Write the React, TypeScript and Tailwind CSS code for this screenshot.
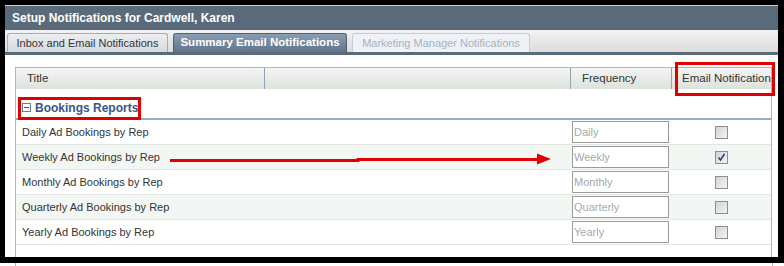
import React from 'react';

const rows = [
  { title: 'Daily Ad Bookings by Rep', freq: 'Daily', checked: false },
  { title: 'Weekly Ad Bookings by Rep', freq: 'Weekly', checked: true },
  { title: 'Monthly Ad Bookings by Rep', freq: 'Monthly', checked: false },
  { title: 'Quarterly Ad Bookings by Rep', freq: 'Quarterly', checked: false },
  { title: 'Yearly Ad Bookings by Rep', freq: 'Yearly', checked: false },
];

const CheckBox = ({ checked }: { checked: boolean }) => (
  <span className="flex h-[13px] w-[13px] items-center justify-center border border-[#8f8f8f] bg-gradient-to-br from-[#d4d4d4] to-[#f4f4f4]">
    {checked && (
      <svg width="9" height="9" viewBox="0 0 9 9">
        <path d="M1.5 4.5 L3.5 7 L7.5 1" fill="none" stroke="#2c3a80" strokeWidth="1.6" />
      </svg>
    )}
  </span>
);

export default function App() {
  return (
    <div className="relative h-[266px] w-[784px] overflow-hidden bg-white font-['Liberation_Sans',Arial,sans-serif] text-[11px] text-[#333]">
      <div className="flex h-[263px] flex-col border-b-[6px] border-l-[5px] border-r-[6px] border-t-[5px] border-black">
        {/* Title bar */}
        <div className="h-[1px] bg-[#c9d1d8]" />
        <div className="flex h-[24px] items-center bg-[#596b7a] pl-[7px] text-[12px] font-bold text-white">
          Setup Notifications for Cardwell, Karen
        </div>

        {/* Tabs */}
        <div className="flex h-[22px] items-end gap-[5px] bg-gradient-to-b from-[#f2f2f2] to-[#dcdcdc] pl-[2px]">
          <div className="flex h-[19px] w-[161px] items-center justify-center rounded-t-[3px] border border-b-0 border-[#a3adb8] bg-gradient-to-b from-[#eceef1] to-[#d5dae0] text-[#333]">
            Inbox and Email Notifications
          </div>
          <div className="flex h-[19px] w-[174px] items-center justify-center rounded-t-[3px] border border-b-0 border-[#4f6176] bg-gradient-to-b from-[#8a9eb3] to-[#5f7489] text-[11.5px] font-bold text-white">
            Summary Email Notifications
          </div>
          <div className="flex h-[19px] w-[178px] items-center justify-center rounded-t-[3px] border border-b-0 border-[#c3ccd7] bg-[#eef2f7] text-[#a9b1bc]">
            Marketing Manager Notifications
          </div>
        </div>
        <div className="h-[3px] bg-[#5a6b7a]" />

        {/* Content */}
        <div className="flex flex-1 flex-col overflow-hidden pl-[10px] pr-[6px] pt-[12px]">
          <div className="flex flex-1 flex-col border-l border-r border-t border-[#a9b7c5]">
            <div className="grid h-[21px] grid-cols-[249px_306px_101px_99px] bg-gradient-to-b from-[#f3f5f3] to-[#dde2dd] text-[11.5px]">
              <div className="flex items-center border-r border-[#8fa2b6] pl-[11px]">Title</div>
              <div className="border-r border-[#8fa2b6]" />
              <div className="flex items-center border-r border-[#8fa2b6] pl-[11px]">Frequency</div>
              <div className="flex items-center pl-[10px]">Email Notification</div>
            </div>

            <div className="flex h-[31px] items-center gap-[4px] border-b-2 border-[#9aabbd] pl-[6px] pt-[8px] text-[#3b5588]">
              <span className="flex h-[9px] w-[9px] items-center justify-center border border-[#6b7f99]">
                <span className="h-[1px] w-[5px] bg-[#3b5588]" />
              </span>
              <span className="text-[12px] font-bold">Bookings Reports</span>
            </div>

            {rows.map((r, i) => (
              <div
                key={r.title}
                className={`grid h-[25px] grid-cols-[555px_101px_99px] border-b border-[#e3e7e3] ${
                  i % 2 === 1 ? 'bg-[#f3f7f3]' : 'bg-white'
                }`}
              >
                <div className="flex items-center pl-[6px]">{r.title}</div>
                <div className="flex items-center pl-[1px]">
                  <div className="flex h-[22px] w-[97px] items-center border border-[#9a9a9a] bg-white pl-[1px] text-[#a8a8a8]">
                    {r.freq}
                  </div>
                </div>
                <div className="flex items-center justify-center">
                  <CheckBox checked={r.checked} />
                </div>
              </div>
            ))}
          </div>
        </div>
      </div>
      <div className="ml-[15px] h-[3px] w-[758px] border-l border-r border-[#a9b7c5]" />

      {/* Annotations */}
      <div className="absolute left-[18px] top-[97px] h-[23px] w-[123px] border-[3px] border-[#e00000]" />
      <div className="absolute left-[675px] top-[62px] h-[34px] w-[100px] border-[3px] border-[#e00000]" />
      <svg className="absolute left-0 top-0" width="784" height="266">
        <path d="M170 160.5 L358 160.5 L358 159.5 L540 159.5" stroke="#e00000" strokeWidth="3" fill="none" />
        <polygon points="537,153.5 551,159 537,164.5" fill="#e00000" />
      </svg>
    </div>
  );
}
